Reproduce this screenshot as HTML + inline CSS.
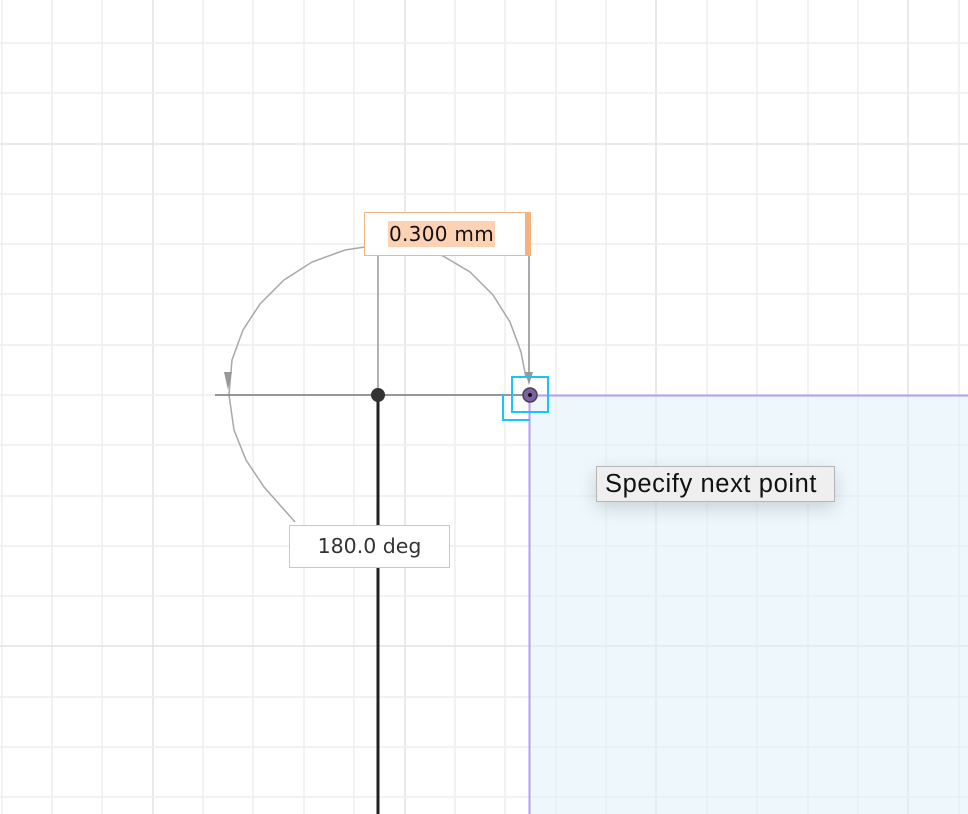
<!DOCTYPE html>
<html><head><style>
html,body{margin:0;padding:0;width:968px;height:814px;overflow:hidden;background:#fff;font-family:"Liberation Sans",sans-serif}
.box{position:absolute;background:#fff;box-sizing:border-box}
</style></head><body>
<svg width="968" height="814" style="position:absolute;left:0;top:0">
<g stroke="#eeeeee" stroke-width="1.5">
<line x1="2" y1="0" x2="2" y2="814"/><line x1="52" y1="0" x2="52" y2="814"/><line x1="102" y1="0" x2="102" y2="814"/><line x1="153" y1="0" x2="153" y2="814" stroke="#e3e3e3"/><line x1="203" y1="0" x2="203" y2="814"/><line x1="253" y1="0" x2="253" y2="814"/><line x1="304" y1="0" x2="304" y2="814"/><line x1="354" y1="0" x2="354" y2="814"/><line x1="405" y1="0" x2="405" y2="814" stroke="#e3e3e3"/><line x1="455" y1="0" x2="455" y2="814"/><line x1="505" y1="0" x2="505" y2="814"/><line x1="556" y1="0" x2="556" y2="814"/><line x1="606" y1="0" x2="606" y2="814"/><line x1="656" y1="0" x2="656" y2="814" stroke="#e3e3e3"/><line x1="707" y1="0" x2="707" y2="814"/><line x1="757" y1="0" x2="757" y2="814"/><line x1="808" y1="0" x2="808" y2="814"/><line x1="858" y1="0" x2="858" y2="814"/><line x1="908" y1="0" x2="908" y2="814" stroke="#e3e3e3"/><line x1="959" y1="0" x2="959" y2="814"/>
<line x1="0" y1="43" x2="968" y2="43"/><line x1="0" y1="93" x2="968" y2="93"/><line x1="0" y1="144" x2="968" y2="144" stroke="#e3e3e3"/><line x1="0" y1="194" x2="968" y2="194"/><line x1="0" y1="244" x2="968" y2="244"/><line x1="0" y1="294" x2="968" y2="294"/><line x1="0" y1="345" x2="968" y2="345"/><line x1="0" y1="395" x2="968" y2="395"/><line x1="0" y1="445" x2="968" y2="445"/><line x1="0" y1="496" x2="968" y2="496"/><line x1="0" y1="546" x2="968" y2="546"/><line x1="0" y1="596" x2="968" y2="596"/><line x1="0" y1="646" x2="968" y2="646" stroke="#e3e3e3"/><line x1="0" y1="697" x2="968" y2="697"/><line x1="0" y1="747" x2="968" y2="747"/><line x1="0" y1="797" x2="968" y2="797"/>
</g>
<rect x="529" y="395" width="440" height="420" fill="#dff0fa" fill-opacity="0.55"/>
<line x1="529.5" y1="395" x2="529.5" y2="814" stroke="#b79cf4" stroke-width="2"/>
<line x1="529" y1="395.5" x2="968" y2="395.5" stroke="#b79cf4" stroke-width="2"/>
<path d="M526 378 L521 352 L510 322 L493 295 L470 272 L443 256 L412 246 L378 245 L345 250 L312 262 L284 280 L260 304 L243 330 L232 360 L229 395 L234 430 L246 460 L264 487 L295 522" fill="none" stroke="#a8a8a8" stroke-width="1.5"/>
<path d="M224 372 L232 372 L228 390 Z" fill="#999"/>
<line x1="378" y1="255" x2="378" y2="395" stroke="#999" stroke-width="1.5"/>
<line x1="529" y1="222" x2="529" y2="380" stroke="#aaa" stroke-width="2"/>
<path d="M525 372 L533 372 L529 385 Z" fill="#999"/>
<line x1="215" y1="395" x2="529" y2="395" stroke="#777" stroke-width="1.5"/>
<line x1="378" y1="395" x2="378" y2="814" stroke="#222" stroke-width="3"/>
<circle cx="378" cy="395" r="7" fill="#333"/>
<path d="M503 394 V420 H530" fill="none" stroke="#1ec2f4" stroke-width="2"/>
<rect x="512" y="377" width="36" height="35" fill="none" stroke="#1ec2f4" stroke-width="2"/>
<circle cx="530" cy="395" r="7" fill="#7d5fa8" stroke="#444" stroke-width="1.5"/>
<circle cx="530" cy="395" r="2" fill="#111"/>
</svg>
<div class="box" style="left:364px;top:212px;width:162px;height:44px;border:1.5px solid #f2b587"></div>
<div style="position:absolute;left:525px;top:212px;width:6px;height:44px;background:#f6b27e"></div>
<div style="position:absolute;left:388px;top:221px;height:26px;padding:0 1px;background:#fdd2b4;font-family:'DejaVu Sans',sans-serif;font-size:20px;line-height:26px;color:#111;letter-spacing:0.3px">0.300 mm</div>
<div class="box" style="left:289px;top:525px;width:161px;height:43px;border:1.5px solid #c8c8c8;font-family:'DejaVu Sans',sans-serif;font-size:20.5px;line-height:40px;text-align:center;color:#333">180.0 deg</div>
<div class="box" style="left:596px;top:466px;width:239px;height:36px;background:#efefef;border:1.5px solid #b5b5b5;box-shadow:0 6px 18px rgba(0,0,0,0.15);font-size:25.5px;line-height:34px;padding-left:8px;color:#111;letter-spacing:0.6px;white-space:nowrap">Specify next point</div>
</body></html>
